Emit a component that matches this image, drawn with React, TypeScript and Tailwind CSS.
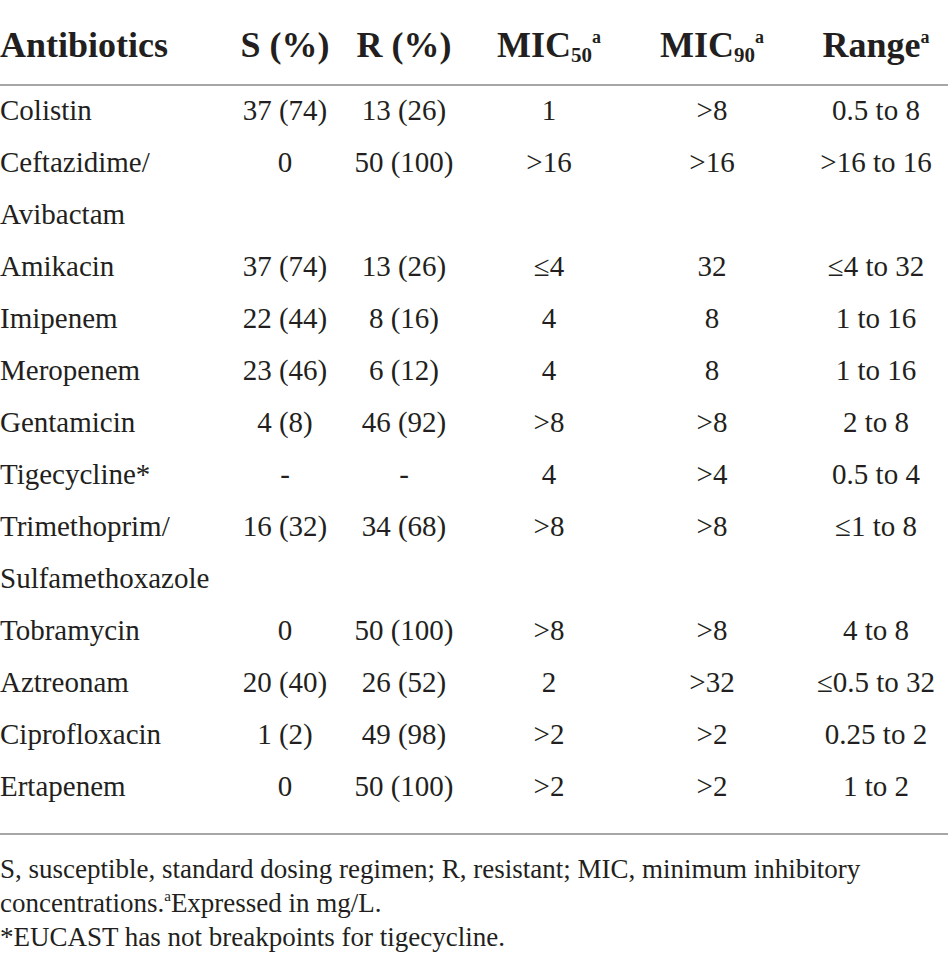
const rows: string[][] = [
  ["Colistin", "37 (74)", "13 (26)", "1", ">8", "0.5 to 8"],
  ["Ceftazidime/", "0", "50 (100)", ">16", ">16", ">16 to 16"],
  ["Avibactam", "", "", "", "", ""],
  ["Amikacin", "37 (74)", "13 (26)", "≤4", "32", "≤4 to 32"],
  ["Imipenem", "22 (44)", "8 (16)", "4", "8", "1 to 16"],
  ["Meropenem", "23 (46)", "6 (12)", "4", "8", "1 to 16"],
  ["Gentamicin", "4 (8)", "46 (92)", ">8", ">8", "2 to 8"],
  ["Tigecycline*", "-", "-", "4", ">4", "0.5 to 4"],
  ["Trimethoprim/", "16 (32)", "34 (68)", ">8", ">8", "≤1 to 8"],
  ["Sulfamethoxazole", "", "", "", "", ""],
  ["Tobramycin", "0", "50 (100)", ">8", ">8", "4 to 8"],
  ["Aztreonam", "20 (40)", "26 (52)", "2", ">32", "≤0.5 to 32"],
  ["Ciprofloxacin", "1 (2)", "49 (98)", ">2", ">2", "0.25 to 2"],
  ["Ertapenem", "0", "50 (100)", ">2", ">2", "1 to 2"],
];

const grid = "grid grid-cols-[220px_130px_108px_182px_144px_164px]";

export default function App() {
  return (
    <div
      className="w-[948px] h-[967px] bg-white text-[#231f20]"
      style={{ fontFamily: '"Liberation Serif", "Times New Roman", serif' }}
    >
      <div className={`${grid} h-[86px] items-end pb-[21px] text-[36px] font-bold leading-none border-b-2 border-[#a6a6a6]`}>
        <div>Antibiotics</div>
        <div className="text-center">S (%)</div>
        <div className="text-center">R (%)</div>
        <div className="text-center">
          MIC<sub className="text-[21px] align-baseline relative top-[5px]">50</sub>
          <sup className="text-[18px] align-baseline relative -top-[14px]">a</sup>
        </div>
        <div className="text-center">
          MIC<sub className="text-[21px] align-baseline relative top-[5px]">90</sub>
          <sup className="text-[18px] align-baseline relative -top-[14px]">a</sup>
        </div>
        <div className="text-center pl-5">
          Range<sup className="text-[18px] align-baseline relative -top-[14px]">a</sup>
        </div>
      </div>

      <div className="pb-[19px] border-b-2 border-[#a6a6a6]">
        {rows.map((r, i) => (
          <div key={i} className={`${grid} h-[52px] leading-[48px] text-[29px]`}>
            <div className="whitespace-nowrap">{r[0]}</div>
            <div className="text-center">{r[1]}</div>
            <div className="text-center">{r[2]}</div>
            <div className="text-center">{r[3]}</div>
            <div className="text-center">{r[4]}</div>
            <div className="text-center pl-5 whitespace-nowrap">{r[5]}</div>
          </div>
        ))}
      </div>

      <div className="pt-[17px] text-[27px] leading-[34px]">
        <p>S, susceptible, standard dosing regimen; R, resistant; MIC, minimum inhibitory</p>
        <p>
          concentrations.<sup className="text-[15px] align-baseline relative -top-[11px]">a</sup>Expressed in mg/L.
        </p>
        <p>*EUCAST has not breakpoints for tigecycline.</p>
      </div>
    </div>
  );
}
